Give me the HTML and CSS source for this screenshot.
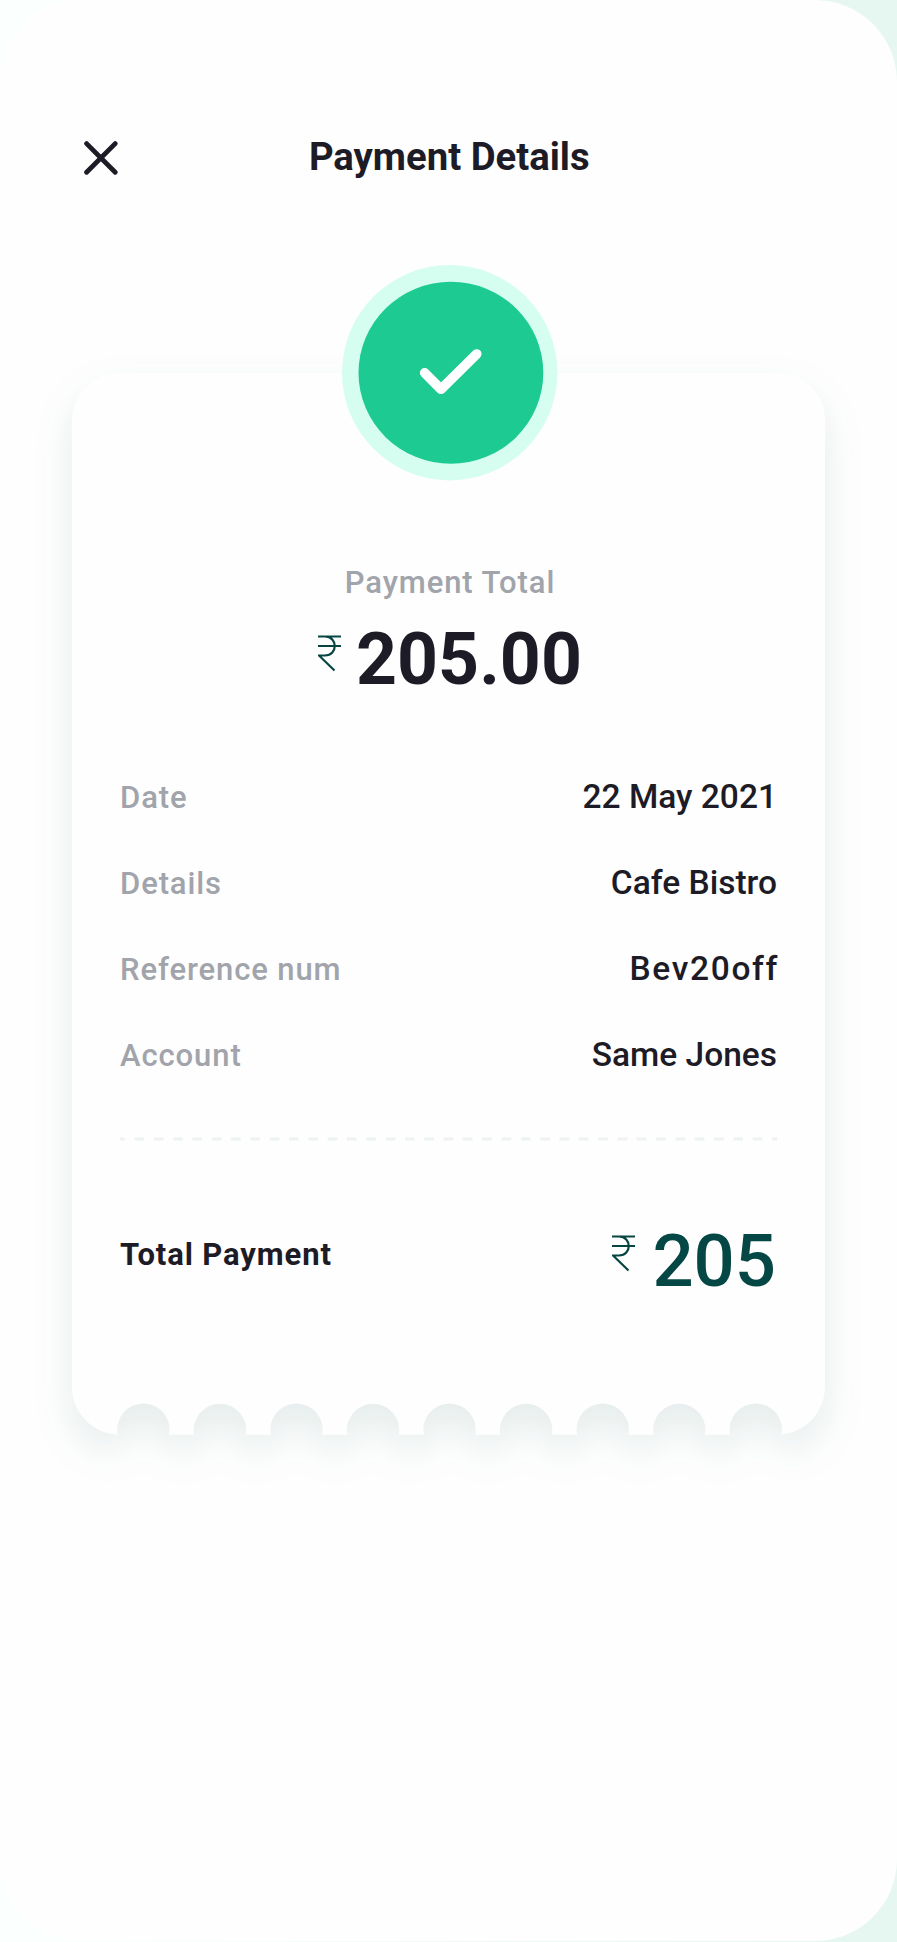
FILE: index.html
```html
<!DOCTYPE html>
<html lang="en">
<head>
<meta charset="utf-8">
<title>Payment Details</title>
<link rel="stylesheet" href="styles.css">
</head>
<body>
<main class="screen">
  <header class="topbar">
    <button class="close" aria-label="Close">
      <svg width="34" height="34" viewBox="0 0 34 34"><path d="M2.6 2.6 31.2 31.2M31.2 2.6 2.6 31.2"/></svg>
    </button>
    <h1 class="title">Payment Details</h1>
  </header>
  <section class="receipt">
    <svg class="paper" width="753" height="1063" viewBox="0 0 753 1063">
      <path d="M48 .7H705A48 48 0 0 1 753 48.700V1015A48 48 0 0 1 709.500 1062.700A26.200 26.200 0 1 0 658.100 1062.700H633A26.200 26.200 0 1 0 581.500 1062.700H556.400A26.200 26.200 0 1 0 505 1062.700H479.900A26.200 26.200 0 1 0 428.400 1062.700H403.300A26.200 26.200 0 1 0 351.900 1062.700H326.800A26.200 26.200 0 1 0 275.300 1062.700H250.200A26.200 26.200 0 1 0 198.800 1062.700H173.700A26.200 26.200 0 1 0 122.200 1062.700H97.100A26.200 26.200 0 1 0 45.700 1062.700A48 48 0 0 1 0 1015V48.700A48 48 0 0 1 48 .7Z"/>
    </svg>
    <svg class="badge" width="216" height="216" viewBox="0 0 216 216">
      <circle class="badge-ring" cx="107.700" cy="107.700" r="107.700"/>
      <ellipse class="badge-disc" cx="108.900" cy="107.800" rx="92.400" ry="91"/>
      <path class="badge-check" d="M82.700 107.900 99 124.200 134.700 89"/>
    </svg>
    <p class="caption">Payment Total</p>
    <div class="amount">
      <svg class="rupee" width="23" height="37" viewBox="0 0 23 37"><path d="M0 1.500H23M0 11H23M0 1.500H7C20 1.500 20 20.500 7 20.500H1L16.500 35.500"/></svg>
      <span class="amount-value">205.00</span>
    </div>
    <dl class="rows">
      <div class="row"><dt>Date</dt><dd class="date">22 May 2021</dd></div>
      <div class="row"><dt>Details</dt><dd>Cafe Bistro</dd></div>
      <div class="row"><dt>Reference num</dt><dd class="code">Bev20off</dd></div>
      <div class="row"><dt>Account</dt><dd>Same Jones</dd></div>
    </dl>
    <svg class="divider" width="657" height="4" viewBox="0 0 657 4"><path d="M0 2H657"/></svg>
    <div class="total">
      <span class="total-label">Total Payment</span>
      <div class="total-amount">
        <svg class="rupee" width="23" height="37" viewBox="0 0 23 37"><path d="M0 1.500H23M0 11H23M0 1.500H7C20 1.500 20 20.500 7 20.500H1L16.500 35.500"/></svg>
        <span class="total-value">205</span>
      </div>
    </div>
  </section>
</main>
</body>
</html>
```

FILE: styles.css
```css
* { box-sizing: border-box; margin: 0; padding: 0; }
body {
  width: 897px;
  height: 1942px;
  overflow: hidden;
  background: linear-gradient(90deg, #fbfffd 0%, #fbfffd 12%, #e6f7f1 90%);
  font-family: Roboto, "Liberation Sans", sans-serif;
  color: #1d1b25;
}
svg { display: block; flex: none; }
.screen {
  width: 896.5px;
  height: 1941px;
  border-radius: 82px;
  background: #fefefe;
  padding: 127px 72px 0;
}
.topbar {
  display: grid;
  grid-template-columns: 60px 1fr 60px;
  align-items: center;
  height: 60px;
}
.close { border: 0; background: none; padding: 2px 0 0 11.500px; }
.close path { fill: none; stroke: #1d1b25; stroke-width: 4.800; stroke-linecap: round; }
.title {
  text-align: center;
  white-space: nowrap;
  font-size: 38.300px;
  line-height: 60px;
  font-weight: 700;
  padding-left: 2px;
  letter-spacing: 0;
}
.receipt {
  position: relative;
  width: 753px;
  margin-top: 185px;
  padding: 0 48px;
  display: flex;
  flex-direction: column;
  align-items: stretch;
  height: 1063px;
}
.paper {
  position: absolute;
  inset: 0;
  z-index: 0;
  overflow: visible;
  fill: #fefefe;
  filter: drop-shadow(0 18px 19px rgba(0, 70, 67, .095));
}
.badge, .caption, .amount, .rows, .divider, .total { position: relative; z-index: 1; }
.badge { align-self: center; margin: -107px 0 0 2px; }
.badge-ring { fill: #d6fef0; }
.badge-disc { fill: #1dcb92; }
.badge-check { fill: none; stroke: #fff; stroke-width: 9.700; stroke-linecap: round; stroke-linejoin: round; }
.caption {
  margin-top: 82px;
  padding-left: 3px;
  text-align: center;
  font-size: 31px;
  line-height: 40px;
  font-weight: 500;
  letter-spacing: .9px;
  color: #a1a4ab;
}
.amount {
  display: flex;
  justify-content: center;
  align-items: flex-start;
  gap: 15px;
  height: 80px;
  margin-top: 17px;
  padding-left: 3px;
}
.rupee { margin-top: 15px; }
.rupee path { fill: none; stroke: #064642; stroke-width: 2.200; }
.amount-value { font-size: 71.500px; line-height: 80px; font-weight: 700; }
.rows { margin-top: 72px; }
.row { display: flex; justify-content: space-between; align-items: baseline; height: 86px; line-height: 50px; }
.row dt { font-size: 31px; font-weight: 500; letter-spacing: .9px; color: #a1a4ab; }
.row dd { font-size: 33.500px; font-weight: 500; }
.row .code { letter-spacing: 1.650px; margin-right: -2px; }
.divider { margin-top: 21px; }
.divider path { fill: none; stroke: #edf2f2; stroke-width: 3.200; stroke-dasharray: 9.660 9.660; stroke-dashoffset: 4.830; }
.total { display: flex; justify-content: space-between; align-items: flex-start; margin-top: 79px; height: 80px; }
.total-label { font-size: 31px; line-height: 70px; font-weight: 700; letter-spacing: .880px; }
.total-amount { display: flex; gap: 17px; padding-right: 1px; }
.total-value { font-size: 72.500px; line-height: 84px; font-weight: 500; color: #044744; }
```
